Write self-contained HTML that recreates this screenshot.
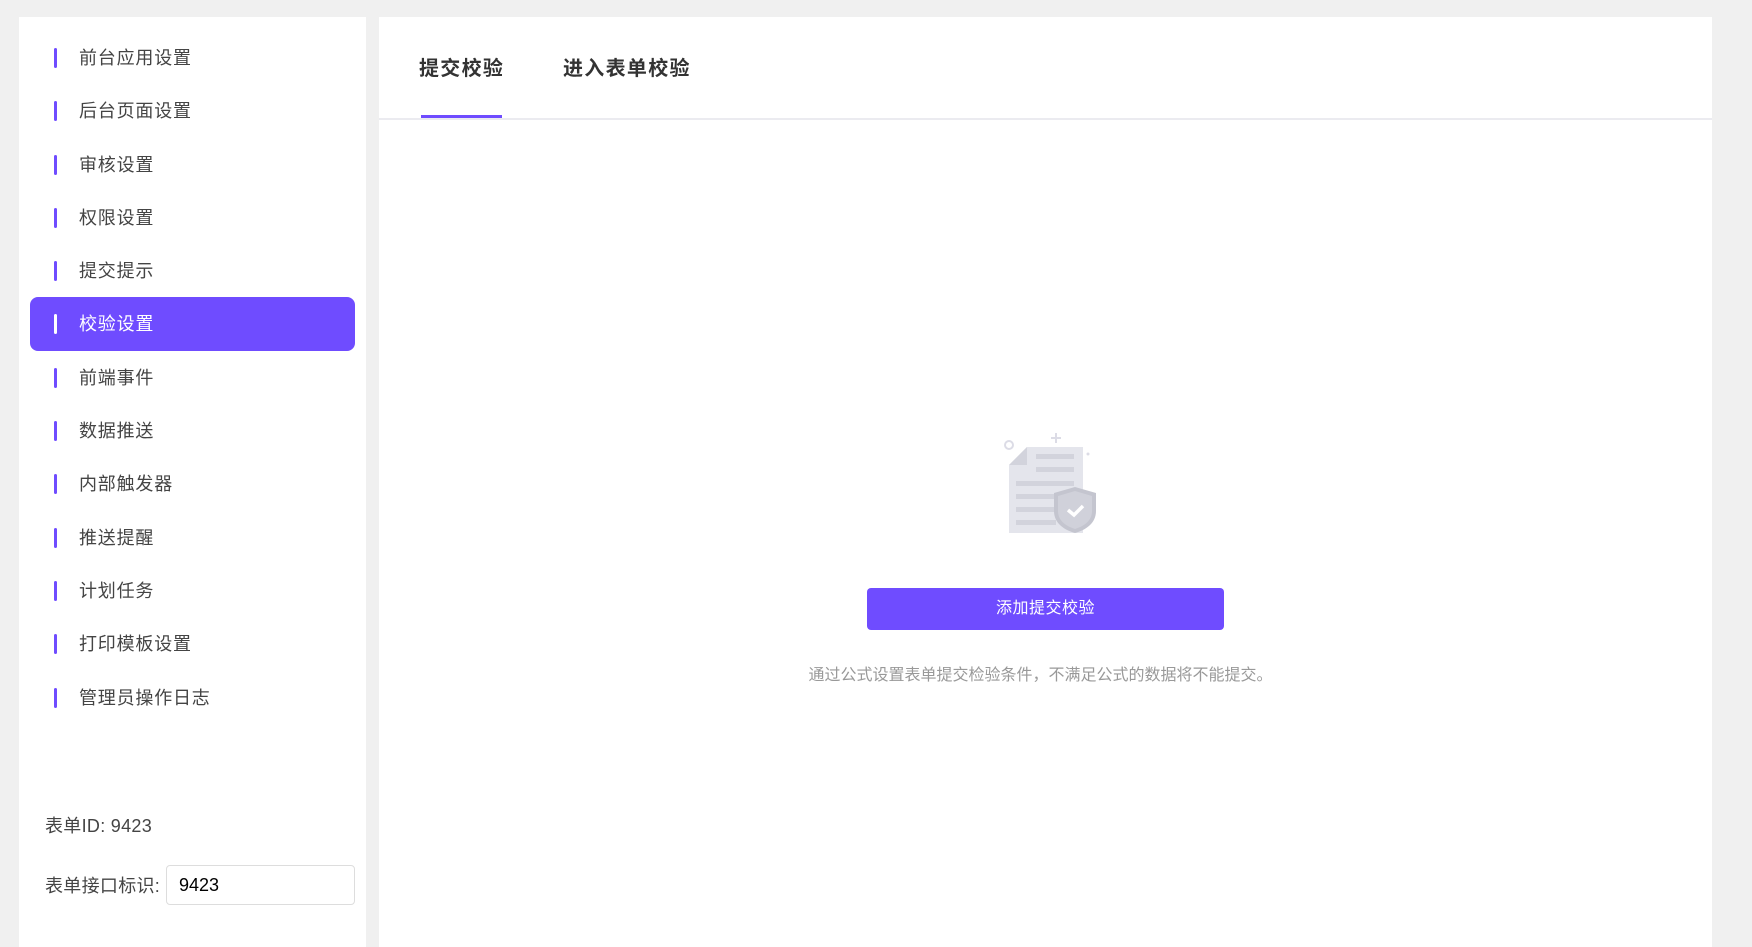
<!DOCTYPE html>
<html><head><meta charset="utf-8"><style>
*{margin:0;padding:0;box-sizing:border-box}
body{width:1752px;height:947px;background:#f0f0f0;font-family:"Liberation Sans","Noto Sans CJK SC",sans-serif;position:relative;overflow:hidden;color:#333}
.side{position:absolute;left:19px;top:17px;width:347px;height:930px;background:#fff}
.item{position:absolute;left:11px;width:325px;height:54px;font-size:18px;color:#444;line-height:54px;letter-spacing:0.8px}
.item i{position:absolute;left:24px;top:17px;width:3px;height:20px;background:#6f4cff;border-radius:2px}
.item span{position:absolute;left:49px}
.item.act{background:#6f4cff;color:#fff;border-radius:8px}
.item.act i{background:#fff}
.main{position:absolute;left:379px;top:17px;width:1333px;height:930px;background:#fff}
.tab{position:absolute;top:35px;font-size:20px;font-weight:bold;color:#333;letter-spacing:1.3px}
.ul{position:absolute;left:42px;top:98px;width:81px;height:4px;background:#6f4cff}
.div{position:absolute;left:0;top:101px;width:1333px;height:2px;background:#ebebf0}
.btn{position:absolute;left:488px;top:571px;width:357px;height:42px;background:#6f4cff;border-radius:4px;color:#fff;font-size:16px;text-align:center;line-height:42px;letter-spacing:0.5px}
.hint{position:absolute;left:0;width:1333px;text-align:center;top:644px;font-size:16px;color:#999;padding-right:10px}
</style></head><body>
<div class="side">
<div class="item" style="top:14px"><i></i><span>前台应用设置</span></div>
<div class="item" style="top:67px"><i></i><span>后台页面设置</span></div>
<div class="item" style="top:121px"><i></i><span>审核设置</span></div>
<div class="item" style="top:174px"><i></i><span>权限设置</span></div>
<div class="item" style="top:227px"><i></i><span>提交提示</span></div>
<div class="item act" style="top:280px"><i></i><span>校验设置</span></div>
<div class="item" style="top:334px"><i></i><span>前端事件</span></div>
<div class="item" style="top:387px"><i></i><span>数据推送</span></div>
<div class="item" style="top:440px"><i></i><span>内部触发器</span></div>
<div class="item" style="top:494px"><i></i><span>推送提醒</span></div>
<div class="item" style="top:547px"><i></i><span>计划任务</span></div>
<div class="item" style="top:600px"><i></i><span>打印模板设置</span></div>
<div class="item" style="top:654px"><i></i><span>管理员操作日志</span></div>
<div style="position:absolute;left:26px;top:795px;font-size:18px;color:#444;letter-spacing:0.3px">表单ID: 9423</div>
<div style="position:absolute;left:26px;top:855px;font-size:18px;color:#444;letter-spacing:0.3px">表单接口标识:</div>
<div style="position:absolute;left:147px;top:848px;width:189px;height:40px;border:1px solid #ddd;border-radius:4px;font-size:18px;color:#000;line-height:38px;padding-left:12px">9423</div>
</div>
<div class="main">
<div class="tab" style="left:40px">提交校验</div>
<div class="tab" style="left:184px">进入表单校验</div>
<div class="ul"></div>
<div class="div"></div>
<svg style="position:absolute;left:621px;top:414px" width="110" height="110" viewBox="0 0 110 110">
<circle cx="9" cy="14" r="4" fill="none" stroke="#dcdce6" stroke-width="2"/>
<path d="M56 2v10M51 7h10" stroke="#dcdce6" stroke-width="2"/>
<circle cx="88" cy="23" r="1.5" fill="#dcdce6"/>
<path d="M27 16h56v86H9V34z" fill="#e4e5ec"/>
<path d="M27 16v18H9z" fill="#d2d3dc"/>
<rect x="36" y="23" width="38" height="5" fill="#d2d3dc"/>
<rect x="36" y="36" width="38" height="5" fill="#d2d3dc"/>
<rect x="16" y="50" width="58" height="5" fill="#d2d3dc"/>
<rect x="16" y="63" width="40" height="5" fill="#d2d3dc"/>
<rect x="16" y="76" width="40" height="5" fill="#d2d3dc"/>
<rect x="16" y="89" width="40" height="5" fill="#d2d3dc"/>
<path d="M75 56l21 6v18c0 12-10 19-21 22c-11-3-21-10-21-22V62z" fill="#c4c5cf"/>
<path d="M75 60l17 5v15c0 10-8 15-17 18c-9-3-17-8-17-18V65z" fill="#d0d1da"/>
<path d="M68 79l6 5l9-9" fill="none" stroke="#fff" stroke-width="3.5"/>
</svg>
<div class="btn">添加提交校验</div>
<div class="hint">通过公式设置表单提交检验条件，不满足公式的数据将不能提交。</div>
</div>
</body></html>
